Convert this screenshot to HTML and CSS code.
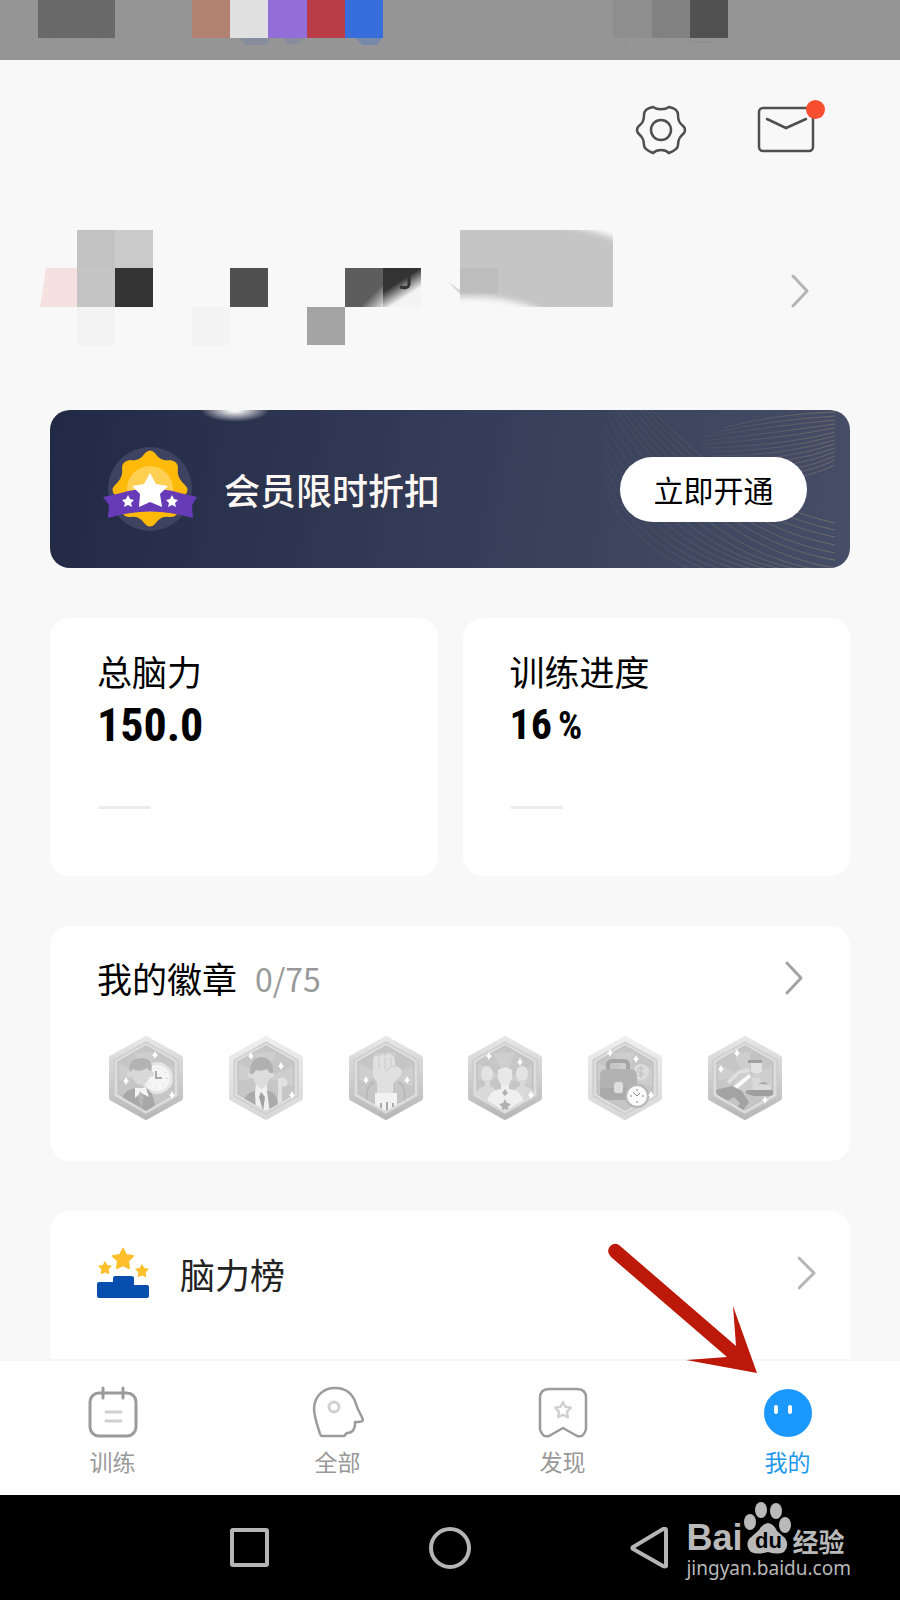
FILE: index.html
```
<!DOCTYPE html>
<html lang="zh-CN">
<head>
<meta charset="UTF-8">
<meta name="viewport" content="width=device-width, initial-scale=1.0">
<title>我的</title>
<link rel="stylesheet" href="styles.css">
</head>
<body>

<!-- Shared shapes -->
<svg class="defs" width="0" height="0" aria-hidden="true">
    <defs>
        <linearGradient id="rimDark" x1="0" y1="0" x2="0" y2="1">
            <stop offset="0" stop-color="#e6e6e6"/>
            <stop offset="1" stop-color="#b8b8b8"/>
        </linearGradient>
        <linearGradient id="rimLight" x1="0" y1="0" x2="0" y2="1">
            <stop offset="0" stop-color="#eeeeee"/>
            <stop offset="1" stop-color="#d8d8d8"/>
        </linearGradient>
        <clipPath id="hexClip"><path d="M37 9 66 26V58L37 75 8 58V26Z"/></clipPath>
        <path id="hex" d="M37 3 71 22V62L37 81 3 62V22Z" stroke-width="6" stroke-linejoin="round"/>
        <g id="hexCore">
            <path d="M37 6 69 24V60L37 78 5 60V24Z" fill="#dcdcdc" stroke="#c6c6c6" stroke-width="1" stroke-linejoin="round"/>
            <path d="M37 10 65 26V58L37 74 9 58V26Z" fill="#c6c6c6" stroke="#bdbdbd"/>
            <path d="M37 42 25 17 47 16ZM37 42 10 27V44ZM37 42 64 30V50Z" fill="#cecece"/>
        </g>
        <path id="spark" d="M0-4Q1-1 3 0Q1 1 0 4Q-1 1-3 0Q-1-1 0-4Z" fill="#fff"/>
        <path id="star" d="M0-10 3-4 10-3 5 2 6 9 0 6-6 9-5 2-10-3-3-4Z" stroke-linejoin="round"/>
    </defs>
</svg>

<div class="app">

    <div class="status-bar">
        <svg width="728" height="60" viewBox="0 0 728 60" aria-hidden="true">
            <g opacity="0.5">
                <path d="M26 38v6m5-6 5 5m14-5v5m8-4 5 4m9-5v5m14-4v4m10-5h8m8 0v5m16-4v4m8-4v3m16-4v5M625 38v5m14-5v4m22-4v4m30 0h20" stroke="#858585" fill="none"/>
                <path d="M240 38h30l-3 7h-22ZM282 38h22l-5 6h-12Z" fill="#7c87a8"/>
                <path d="M356 38h26l-5 7h-15Z" fill="#5b7fc0"/>
            </g>
            <path d="M38 0h77v38H38z" fill="#696969"/>
            <path d="M192 0h38v38h-38z" fill="#b18270"/>
            <path d="M230 0h38v38h-38z" fill="#e0e0e0"/>
            <path d="M268 0h39v38h-39z" fill="#946ed8"/>
            <path d="M307 0h38v38h-38z" fill="#b93c48"/>
            <path d="M345 0h38v38h-38z" fill="#376edb"/>
            <path d="M613 0h39v38h-39z" fill="#8e8e8e"/>
            <path d="M652 0h38v38h-38z" fill="#818181"/>
            <path d="M690 0h38v38h-38z" fill="#515151"/>
        </svg>
    </div>

    <main class="content">

        <div class="toolbar">
            <button class="icon-button" aria-label="设置">
                <svg width="52" height="50" viewBox="0 0 52 50" fill="none" stroke="#4f4f4f" stroke-width="2.5">
                    <path d="M18 2C22 5 30 5 34 2C40 3 43 6 43 10C43 17 45 18 49 22Q51 25 49 28C45 32 43 34 43 40C43 44 39 46 34 48C30 44 22 44 18 48C13 46 9 44 9 40C9 34 7 32 3 28Q1 25 3 22C7 18 9 17 9 10C9 6 12 3 18 2Z"/>
                    <circle cx="26" cy="25" r="10"/>
                </svg>
            </button>
            <button class="icon-button mail" aria-label="消息">
                <svg width="58" height="50" viewBox="0 0 58 50" fill="none" stroke="#4f4f4f" stroke-width="2.5" stroke-linecap="round">
                    <rect x="2" y="3" width="54" height="43" rx="4"/>
                    <path d="M10 14 29 23 49 14"/>
                </svg>
                <span class="dot"></span>
            </button>
        </div>

        <div class="profile">
            <svg width="576" height="116" viewBox="0 0 576 116" aria-hidden="true">
                <defs>
                    <linearGradient id="fade" x1="0.2" y1="0.1" x2="0.7" y2="0.9">
                        <stop offset="0.35" stop-color="#333"/>
                        <stop offset="0.8" stop-color="#f4f4f4"/>
                    </linearGradient>
                    <linearGradient id="fade2" x1="0" y1="0" x2="1" y2="1">
                        <stop offset="0.7" stop-color="#5d5d5d"/>
                        <stop offset="1" stop-color="#e0e0e0"/>
                    </linearGradient>
                    <filter id="soft"><feGaussianBlur stdDeviation="3"/></filter>
                    <clipPath id="tagClip"><path d="M422 0h153v77H422z"/></clipPath>
                </defs>
                <path d="M8 38h31v39H2Z" fill="#f5e1e0"/>
                <path d="M39 0h38v38H39z" fill="#c2c2c2"/>
                <path d="M77 0h38v38H77z" fill="#cacaca"/>
                <path d="M39 38h38v39H39z" fill="#c5c5c5"/>
                <path d="M77 38h38v39H77z" fill="#343434"/>
                <path d="M39 77h38v38H39zM154 77h38v38h-38z" fill="#f3f3f3"/>
                <path d="M192 38h38v39h-38z" fill="#505050"/>
                <path d="M269 77h38v38h-38z" fill="#a4a4a4"/>
                <path d="M307 38h38v39h-38z" fill="url(#fade2)"/>
                <path d="M345 38h38v39h-38z" fill="url(#fade)"/>
                <path d="M371 44v11q-1 4-9 2" fill="none" stroke="#333" stroke-width="3"/>
                <path d="M410 52 422 60V64Z" fill="#d8d8d8"/>
                <path d="M422 0h153v77H422z" fill="#c5c5c5"/>
                <path d="M422 38h38v26h-38z" fill="#bdbdbd"/>
                <g clip-path="url(#tagClip)">
                    <path d="M520-6Q560 0 590 14V-10ZM410 67H440Q480 68 512 84H410Z" fill="#f8f8f8" filter="url(#soft)"/>
                </g>
            </svg>
            <a class="chevron" href="#" aria-label="个人资料">
                <svg width="18" height="34" viewBox="0 0 18 34"><path d="M2 2 16 17 2 32"/></svg>
            </a>
        </div>

        <section class="banner">
            <svg class="waves" width="243" height="158" viewBox="0 0 243 158" fill="none" aria-hidden="true">
                <defs>
                    <linearGradient id="waveFade">
                        <stop offset="0" stop-color="#6c6862" stop-opacity="0.2"/>
                        <stop offset="1" stop-color="#77746a" stop-opacity="0.8"/>
                    </linearGradient>
                </defs>
                <g stroke="url(#waveFade)">
                    <path d="M60 0C110 50 160 95 243 113M54 0C104 54 160 103 243 120M48 0C98 58 158 111 243 127M42 0C92 62 156 119 243 135M36 0C86 66 154 127 243 143M30 0C80 70 152 135 243 150M25 0C75 76 150 143 243 158M20 2C68 82 140 146 228 160M16 8C62 86 132 148 212 160M14 18C56 90 122 148 196 160M13 28C50 94 112 146 180 160M12 38C46 98 102 146 164 160M12 48C42 102 92 146 148 160M12 58C38 106 82 146 132 160M12 70C34 110 72 144 116 160M14 84C32 116 62 144 100 160"/>
                    <path d="M243 2Q190 3 130 18M243 6Q180 10 120 23M243 10Q180 16 112 27M243 14Q180 23 110 31M243 18Q180 30 110 34M243 22Q190 36 110 38M243 26Q190 41 114 42M243 30Q190 46 120 46M243 34Q190 51 130 50M243 38Q200 54 140 54M243 42Q200 59 150 58M243 46Q205 63 160 62M243 50Q210 66 170 66M243 55Q220 66 190 70"/>
                </g>
            </svg>
            <svg class="medal" width="96" height="84" viewBox="0 0 96 84" aria-hidden="true">
                <circle cx="48" cy="42" r="42" fill="#3d4360"/>
                <path d="M43 6Q48 1 53 6C57 12 61 14 68 13Q76 14 76 21C75 29 78 33 83 38Q88 43 83 48C76 54 75 56 76 62Q76 71 67 70C60 69 57 72 53 77Q48 82 43 77C39 72 36 69 29 70Q20 71 20 62C21 56 20 54 13 48Q8 43 13 38C18 33 21 29 20 21Q20 14 28 13C35 14 39 12 43 6Z" fill="#ffb908"/>
                <circle cx="48" cy="42" r="23" fill="#ffcf51"/>
                <path d="M1 50 19 46Q48 37 78 46L95 50 90 58 91 71Q48 58 6 71L7 58Z" fill="#673ab7"/>
                <path d="M48 26 54 37 66 39 58 47 60 60 48 55 37 60 38 47 30 39 42 37Z" fill="#fff"/>
                <path d="M26 48 28 52 32 53 29 56 30 60 26 58 22 60 23 56 20 53 24 52ZM70 48 72 52 76 53 73 56 74 60 70 58 66 60 67 56 64 53 68 52Z" fill="#fff"/>
            </svg>
            <h2>会员限时折扣</h2>
            <button class="open-button">立即开通</button>
        </section>

        <div class="stats">
            <section class="card stat">
                <h3>总脑力</h3>
                <p class="value">150.0</p>
                <p class="empty">——</p>
            </section>
            <section class="card stat">
                <h3>训练进度</h3>
                <p class="value value-percent">16<span class="unit">%</span></p>
                <p class="empty">——</p>
            </section>
        </div>

        <section class="card badges">
            <div class="badges-head">
                <h3>我的徽章</h3>
                <span class="count">0/75</span>
                <a class="chevron dark" href="#" aria-label="全部徽章">
                    <svg width="18" height="34" viewBox="0 0 18 34"><path d="M2 2 16 17 2 32"/></svg>
                </a>
            </div>
            <div class="badge-list">
                <!-- Clerk and clock -->
                <svg width="74" height="84" viewBox="0 0 74 84">
                    <use href="#hex" fill="url(#rimDark)" stroke="url(#rimDark)"/>
                    <use href="#hexCore"/>
                    <g clip-path="url(#hexClip)">
                        <circle cx="48" cy="42" r="16" fill="#e4e4e4"/>
                        <circle cx="48" cy="42" r="13" fill="#f5f5f5"/>
                        <circle cx="48" cy="42" r="10" fill="none" stroke="#bbb" stroke-dasharray="1 7"/>
                        <path d="M47 35v7h6" fill="none" stroke="#aaa" stroke-width="2"/>
                        <path d="M14 76V60Q18 53 27 52H36Q45 54 47 76Z" fill="#a8a8a8"/>
                        <path d="M26 52h11l3 9-8-4-6 5Z" fill="#f4f4f4"/>
                        <path d="M31 55l4 6-3 14-3-14Z" fill="#b5b5b5"/>
                        <path d="M23 32H41V40Q38 49 32 49Q25 48 23 40Z" fill="#d8d8d8"/>
                        <circle cx="21" cy="38" r="3" fill="#d8d8d8"/><circle cx="42" cy="38" r="3" fill="#d8d8d8"/>
                        <path d="M21 36Q19 24 28 23Q36 20 41 25Q44 29 42 36L38 32Q30 37 24 33Z" fill="#b3b3b3"/>
                    </g>
                    <use href="#spark" x="46" y="19"/><use href="#spark" x="17" y="45"/><use href="#spark" x="63" y="59"/>
                </svg>
                <!-- Manager -->
                <svg width="74" height="84" viewBox="0 0 74 84">
                    <use href="#hex" fill="url(#rimLight)" stroke="url(#rimLight)"/>
                    <use href="#hexCore"/>
                    <g clip-path="url(#hexClip)">
                        <path d="M49 74V43Q55 38 59 47Q57 52 53 50V74Z" fill="#e2e2e2"/>
                        <path d="M12 78Q13 57 26 55H40Q50 57 49 78Z" fill="#aaa"/>
                        <path d="M27 47h11v8l3 22H27l-1-20Z" fill="#f0f0f0"/>
                        <path d="M32 56l4 5-2 14-4-14Z" fill="#a0a0a0"/>
                        <path d="M23 31H42V40Q38 51 33 53Q26 50 23 40Z" fill="#dcdcdc"/>
                        <circle cx="22" cy="39" r="3" fill="#dcdcdc"/><circle cx="42" cy="39" r="3" fill="#dcdcdc"/>
                        <path d="M21 38Q20 23 32 21Q45 22 44 37H41L38 33Q31 36 27 34L24 38Z" fill="#b0b0b0"/>
                    </g>
                    <use href="#spark" x="22" y="20"/><use href="#spark" x="52" y="30"/><use href="#spark" x="63" y="59"/>
                </svg>
                <!-- Raised fist -->
                <svg width="74" height="84" viewBox="0 0 74 84">
                    <use href="#hex" fill="url(#rimDark)" stroke="url(#rimDark)"/>
                    <use href="#hexCore"/>
                    <g clip-path="url(#hexClip)">
                        <path d="M18 66Q16 50 25 46M55 66Q58 50 49 46" fill="none" stroke="#b8b8b8" stroke-width="2"/>
                        <path d="M24 38V22Q26 18 30 21Q33 16 36 20Q40 15 43 20Q46 19 46 29L53 34Q53 40 48 43L44 48V58H28V46Q25 44 24 38Z" fill="#e0e0e0"/>
                        <path d="M30 22v11M36 21v12M42 21v9M36 37q5-9 11-6" fill="none" stroke="#cacaca"/>
                        <path d="M26 57H48V78H26Z" fill="#f2f2f2"/>
                        <path d="M32 67v9M38 66v9M44 67v9" stroke="#aaa" stroke-width="2"/>
                    </g>
                    <use href="#spark" x="17" y="44"/><use href="#spark" x="58" y="44"/>
                </svg>
                <!-- Team -->
                <svg width="74" height="84" viewBox="0 0 74 84">
                    <use href="#hex" fill="url(#rimDark)" stroke="url(#rimDark)"/>
                    <use href="#hexCore"/>
                    <g clip-path="url(#hexClip)">
                        <ellipse cx="19" cy="38" rx="6" ry="8" fill="#e3e3e3"/>
                        <ellipse cx="54" cy="38" rx="6" ry="8" fill="#e3e3e3"/>
                        <path d="M6 64Q8 51 17 50V44H22V50Q28 51 30 64ZM43 64Q46 51 52 50V44H57V50Q66 51 68 64Z" fill="#d9d9d9"/>
                        <path d="M19 68Q20 54 33 53V46H41V53Q54 54 56 68L37 80Z" fill="#efefef"/>
                        <path d="M30 34Q37 29 44 34V42Q42 50 37 50Q31 49 30 42Z" fill="#e8e8e8"/>
                        <path d="M37 53l3 4-3 3-3-3ZM37 63l2 4 4 1-3 3 1 4-4-2-4 2 1-4-3-3 4-1Z" fill="#b0b0b0"/>
                    </g>
                    <use href="#spark" x="21" y="20"/><use href="#spark" x="52" y="26"/><use href="#spark" x="63" y="59"/>
                </svg>
                <!-- Briefcase and clock -->
                <svg width="74" height="84" viewBox="0 0 74 84">
                    <use href="#hex" fill="url(#rimLight)" stroke="url(#rimLight)"/>
                    <use href="#hexCore"/>
                    <g clip-path="url(#hexClip)">
                        <circle cx="53" cy="36" r="8" fill="#dcdcdc"/>
                        <path d="M56 33Q50 30 50 34T55 37Q55 41 50 39M53 30v12" fill="none" stroke="#bebebe"/>
                        <path d="M20 34V29Q20 25 25 25H36Q40 25 40 29V34" fill="none" stroke="#a5a5a5" stroke-width="4"/>
                        <rect x="12" y="33" width="37" height="31" rx="6" fill="#b2b2b2"/>
                        <path d="M12 52H26V58H35V52H49V64H16Q12 63 12 58Z" fill="#aaa"/>
                        <rect x="26" y="46" width="9" height="11" rx="3" fill="#dedede"/>
                    </g>
                    <circle cx="49" cy="60" r="12" fill="#b6b6b6"/>
                    <circle cx="49" cy="60" r="10" fill="#fafafa"/>
                    <path d="M45 56l4 4 3-3M49 53v2M49 65v2M42 60h2M54 60h2" fill="none" stroke="#888" stroke-width="1"/>
                    <use href="#spark" x="22" y="17"/><use href="#spark" x="48" y="23"/><use href="#spark" x="63" y="59"/>
                </svg>
                <!-- Runner at a desk -->
                <svg width="74" height="84" viewBox="0 0 74 84">
                    <use href="#hex" fill="url(#rimDark)" stroke="url(#rimDark)"/>
                    <use href="#hexCore"/>
                    <g clip-path="url(#hexClip)">
                        <path d="M43 27V36Q48 39 54 36V26Z" fill="#e2e2e2"/>
                        <path d="M42 18Q48 14 54 18V25H42Z" fill="#c2c2c2"/>
                        <path d="M40 24H54V27H40Z" fill="#a0a0a0"/>
                        <path d="M30 40Q36 34 43 36L46 54 33 62 24 50Z" fill="#cecece"/>
                        <path d="M41 38 26 50 29 53 43 41Z" fill="#fafafa"/>
                        <path d="M20 47 31 36 42 34" fill="none" stroke="#dedede" stroke-width="4"/>
                        <path d="M44 42H52L55 49H63V54H45Z" fill="#dadada"/>
                        <path d="M7 54 24 50 34 55 41 66 34 76 28 73 32 67 26 61 14 68Z" fill="#a3a3a3"/>
                        <path d="M39 54H65V60H45L37 57Z" fill="#9f9f9f"/>
                        <path d="M50 48Q56 44 60 48Z" fill="#aaa"/>
                        <path d="M14 62 33 74 27 78Z" fill="#e8e8e8"/>
                    </g>
                    <use href="#spark" x="29" y="17"/><use href="#spark" x="13" y="33"/><use href="#spark" x="57" y="64"/>
                </svg>
            </div>
        </section>

        <section class="card rank">
            <svg width="53" height="52" viewBox="0 0 53 52" aria-hidden="true">
                <g fill="#fdbf2b" stroke="#fdbf2b" stroke-width="2">
                    <use href="#star" transform="translate(26 12)"/>
                    <use href="#star" transform="translate(8 21) scale(0.6)"/>
                    <use href="#star" transform="translate(45 24) scale(0.6)"/>
                </g>
                <path d="M2 35H16V31Q16 29 18 29H34Q37 29 37 31V38H50Q52 38 52 40V49Q52 51 50 51H2Q0 51 0 49V37Q0 35 2 35Z" fill="#084eae"/>
            </svg>
            <h3>脑力榜</h3>
            <a class="chevron" href="#" aria-label="脑力榜">
                <svg width="18" height="34" viewBox="0 0 18 34"><path d="M1 2 16 17 1 32"/></svg>
            </a>
        </section>

    </main>

    <nav class="tabs">
        <a href="#">
            <svg width="52" height="52" viewBox="0 0 52 52" fill="none" stroke="#9b9b9b" stroke-width="3" stroke-linecap="round">
                <rect x="3" y="7" width="46" height="43" rx="9"/>
                <path d="M16 2v10M36 2v10"/>
                <path d="M19 26h15M19 35h15" stroke="#d0d0d0"/>
            </svg>
            <span>训练</span>
        </a>
        <a href="#">
            <svg width="52" height="52" viewBox="0 0 52 52" fill="none" stroke="#9b9b9b" stroke-width="2.5" stroke-linejoin="round">
                <path d="M8 48C6 41 2 31 2 22C3 9 12 2 23 2C34 2 41 8 44 18C46 25 49 28 51 34Q51 36 43 36V39Q42 47 35 47L32 50H10Q9 50 8 48Z"/>
                <circle cx="22" cy="21" r="5" stroke="#d0d0d0" stroke-width="3"/>
            </svg>
            <span>全部</span>
        </a>
        <a href="#">
            <svg width="52" height="52" viewBox="0 0 52 52" fill="none" stroke="#9b9b9b" stroke-width="2.5" stroke-linejoin="round">
                <path d="M12 3H40Q49 3 49 12V43Q47 52 40 50L26 42 12 50Q5 52 3 43V12Q3 3 12 3Z"/>
                <use href="#star" transform="translate(26 24) scale(0.8)" stroke="#d0d0d0" stroke-width="3"/>
            </svg>
            <span>发现</span>
        </a>
        <a href="#" class="active">
            <svg width="52" height="52" viewBox="0 0 52 52">
                <circle cx="26" cy="27" r="24" fill="#1b98fc"/>
                <rect x="12" y="19" width="4" height="9" rx="2" fill="#fff"/>
                <rect x="26" y="19" width="4" height="9" rx="2" fill="#fff"/>
            </svg>
            <span>我的</span>
        </a>
        <svg class="pointer" width="152" height="132" viewBox="0 0 152 132" aria-hidden="true">
            <path d="M3 12A7 7 0 0 1 13 3L130 104 127 64 151 131 80 118 121 115 5 15Z" fill="#bd190b"/>
        </svg>
    </nav>

    <div class="system-bar">
        <button aria-label="最近任务">
            <svg width="42" height="42" viewBox="0 0 42 42"><rect x="3" y="3" width="35" height="35" rx="1"/></svg>
        </button>
        <button aria-label="主屏幕">
            <svg width="42" height="42" viewBox="0 0 42 42"><circle cx="21" cy="21" r="19"/></svg>
        </button>
        <button aria-label="返回">
            <svg width="42" height="42" viewBox="0 0 42 42"><path d="M37 3V39Q36 40 34 39L4 22Q3 21 4 20L34 2Q37 1 37 3Z"/></svg>
        </button>
        <div class="watermark">
            <div class="wm-logo">
                <span class="wm-brand">Bai</span>
                <span class="wm-paw">
                    <svg width="50" height="54" viewBox="0 0 50 54" fill="#b9b9b9" aria-hidden="true">
                        <ellipse cx="8" cy="20" rx="6" ry="8"/>
                        <ellipse cx="19" cy="8" rx="6" ry="8"/>
                        <ellipse cx="34" cy="9" rx="6" ry="8"/>
                        <ellipse cx="43" cy="23" rx="6" ry="8"/>
                        <path d="M26 21Q32 22 35 29L43 36Q48 44 42 50Q36 53 26 50Q15 53 9 50Q3 44 7 37L17 28Q20 22 26 21Z"/>
                    </svg>
                    <span class="wm-du">du</span>
                </span>
                <span class="wm-cn">经验</span>
            </div>
            <div class="wm-url">jingyan.baidu.com</div>
        </div>
    </div>

</div>

</body>
</html>
```
FILE: styles.css
```
* {
    box-sizing: border-box;
}

body {
    margin: 0;
    background-color: #f8f8f8;
    color: #000;
    font-family: "Noto Sans CJK SC", sans-serif;
}

h2, h3, p {
    margin: 0;
    font-weight: normal;
}

button {
    padding: 0;
    border: none;
    background: none;
    font-family: inherit;
    cursor: pointer;
}

svg {
    display: block;
    flex-shrink: 0;
}

.defs {
    position: absolute;
}

.app {
    display: flex;
    flex-direction: column;
    height: 100vh;
}

.status-bar {
    flex-shrink: 0;
    height: 60px;
    background-color: #959595;
    overflow: hidden;
}

.content {
    flex: 1;
    min-height: 0;
    padding: 0 50px;
    overflow: hidden;
}

.toolbar {
    display: flex;
    justify-content: flex-end;
    gap: 70px;
    padding: 45px 35px 0 0;
}

.mail {
    position: relative;
}

.dot {
    position: absolute;
    top: -5px;
    right: -10px;
    width: 19px;
    height: 19px;
    border-radius: 50%;
    background-color: #f94d30;
}

.profile {
    display: flex;
    align-items: center;
    justify-content: space-between;
    margin: 75px 0 64px -12px;
    padding-right: 41px;
}

.profile .chevron {
    padding-top: 5px;
}

.chevron path {
    fill: none;
    stroke: #b5b5b5;
    stroke-width: 3;
    stroke-linecap: round;
    stroke-linejoin: round;
}

.chevron.dark path {
    stroke: #a3a3a3;
}

.banner {
    position: relative;
    display: flex;
    align-items: center;
    height: 158px;
    padding: 0 43px 0 52px;
    border-radius: 20px;
    background: radial-gradient(ellipse at 50% 0, #f4f4f4 10%, rgba(244, 244, 244, 0) 70%) 150px 0 / 70px 12px no-repeat,
        linear-gradient(100deg, #222944, #353c57 50%, #464e67);
    overflow: hidden;
}

.waves {
    position: absolute;
    top: 0;
    right: 15px;
}

.banner h2 {
    flex: 1;
    padding-left: 26px;
    color: #fdf7f3;
    font-size: 36px;
    font-weight: 500;
}

.open-button {
    position: relative;
    width: 187px;
    height: 65px;
    border-radius: 33px;
    background-color: #fff;
    color: #000;
    font-size: 30px;
}

.card {
    border-radius: 20px;
    background-color: #fff;
}

.card h3 {
    font-size: 35px;
    line-height: 48px;
}

.stats {
    display: grid;
    grid-template-columns: 1fr 1fr;
    gap: 25px;
    margin: 50px 0;
}

.stat {
    padding: 29px 47px 53px;
}

.value {
    display: flex;
    align-items: baseline;
    height: 48px;
    margin-top: 4px;
    font-family: "Liberation Sans Narrow", "Roboto Condensed", sans-serif;
    font-size: 46px;
    font-weight: bold;
    line-height: 52px;
}

.value-percent {
    font-size: 42px;
}

.unit {
    margin-left: 6px;
    font-size: 38px;
}

.empty {
    margin-top: 36px;
    color: #ebebeb;
    font-size: 32px;
    font-weight: bold;
    line-height: 40px;
}

.badges {
    padding: 28px 47px 41px;
}

.badges-head {
    display: flex;
    align-items: center;
}

.count {
    flex: 1;
    margin-left: 18px;
    color: #999;
    font-size: 32px;
    line-height: 48px;
}

.badge-list {
    display: flex;
    justify-content: space-between;
    padding: 34px 21px 0 12px;
}

.rank {
    display: flex;
    align-items: center;
    margin-top: 50px;
    padding: 38px 34px 102px 47px;
}

.rank svg {
    margin-top: -2px;
}

.rank h3 {
    flex: 1;
    padding-left: 30px;
    color: #222;
}

/* Bottom tabs */
.tabs {
    position: relative;
    flex-shrink: 0;
    display: grid;
    grid-template-columns: repeat(4, 1fr);
    padding: 25px 0 16px;
    border-top: 2px solid #f7f7f7;
    background-color: #fff;
}

.tabs a {
    display: flex;
    flex-direction: column;
    align-items: center;
    gap: 5px;
    color: #999;
    font-size: 23px;
    line-height: 36px;
    text-decoration: none;
}

.tabs .active {
    color: #1b98ec;
}

.pointer {
    position: absolute;
    right: 142px;
    bottom: 121px;
}

.system-bar {
    position: relative;
    flex-shrink: 0;
    display: flex;
    align-items: center;
    justify-content: center;
    gap: 158px;
    height: 105px;
    background-color: #000;
}

.system-bar button svg {
    fill: none;
    stroke: #b5b5b5;
    stroke-width: 4;
}

/* Site mark over the system bar */
.watermark {
    position: absolute;
    top: 9px;
    right: 49px;
    color: #b9b9b9;
}

.wm-logo {
    display: flex;
    align-items: flex-end;
    height: 52px;
}

.wm-brand {
    font-family: "Liberation Sans", sans-serif;
    font-size: 36px;
    font-weight: bold;
    line-height: 36px;
}

.wm-paw {
    position: relative;
}

.wm-du {
    position: absolute;
    right: 0;
    bottom: 5px;
    left: 2px;
    color: #000;
    font-family: "Liberation Sans", sans-serif;
    font-size: 22px;
    font-weight: bold;
    line-height: 20px;
    text-align: center;
}

.wm-cn {
    font-size: 26px;
    font-weight: bold;
    line-height: 30px;
}

.wm-url {
    font-family: "Noto Sans", sans-serif;
    font-size: 19px;
    line-height: 24px;
}
```
